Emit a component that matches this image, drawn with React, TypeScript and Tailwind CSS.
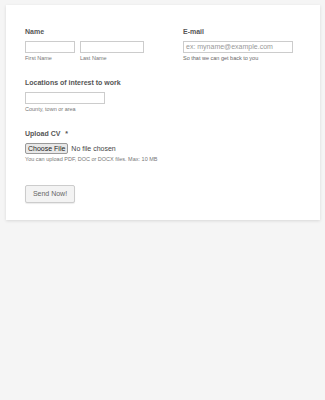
export default function App() {
  return (
    <div className="min-h-[400px] w-[325px] bg-[#f5f5f5] pt-[5px] pl-[6px] font-['Liberation_Sans',Arial,sans-serif]">
      <div className="w-[314px] h-[215px] bg-white shadow-[0_1px_3px_rgba(0,0,0,0.12)] pt-[22px] pl-[19px]">
        <div className="flex">
          <div className="w-[158px]">
            <div className="text-[7px] font-bold text-[#555] leading-[10px]">Name</div>
            <div className="flex gap-[5px] mt-[4px]">
              <div>
                <div className="w-[50px] h-[12px] border border-[#ccc] bg-white" />
                <div className="text-[5.5px] text-[#777] mt-[1px] leading-[8px]">First Name</div>
              </div>
              <div>
                <div className="w-[64px] h-[12px] border border-[#ccc] bg-white" />
                <div className="text-[5.5px] text-[#777] mt-[1px] leading-[8px]">Last Name</div>
              </div>
            </div>
          </div>
          <div>
            <div className="text-[7px] font-bold text-[#555] leading-[10px]">E-mail</div>
            <div className="mt-[4px] w-[110px] h-[12px] border border-[#ccc] bg-white text-[7px] text-[#999] leading-[10px] pl-[2px]">
              ex: myname@example.com
            </div>
            <div className="text-[5.5px] text-[#666] mt-[1px] leading-[8px]">So that we can get back to you</div>
          </div>
        </div>

        <div className="mt-[16px]">
          <div className="text-[7px] font-bold text-[#555] leading-[10px]">Locations of interest to work</div>
          <div className="mt-[4px] w-[80px] h-[12px] border border-[#ccc] bg-white" />
          <div className="text-[5.5px] text-[#777] mt-[1px] leading-[8px]">County, town or area</div>
        </div>

        <div className="mt-[16px]">
          <div className="text-[7px] font-bold text-[#555] leading-[10px]">
            Upload CV <span className="ml-[3px]">*</span>
          </div>
          <div className="flex items-center mt-[4px] gap-[3px]">
            <div className="h-[11px] px-[2px] border border-[#999] rounded-[2px] bg-[#e8e8e8] text-[7px] leading-[9px] text-[#222]">
              Choose File
            </div>
            <span className="text-[7px] text-[#444] leading-[10px]">No file chosen</span>
          </div>
          <div className="text-[5.5px] text-[#777] mt-[1px] leading-[8px]">
            You can upload PDF, DOC or DOCX files. Max: 10 MB
          </div>
        </div>

        <div className="mt-[22px]">
          <div className="w-[50px] h-[18px] border border-[#ccc] rounded-[2px] bg-[#f3f3f3] shadow-[0_1px_1px_rgba(0,0,0,0.08)] flex items-center justify-center text-[7px] text-[#666]">
            Send Now!
          </div>
        </div>
      </div>
    </div>
  );
}
